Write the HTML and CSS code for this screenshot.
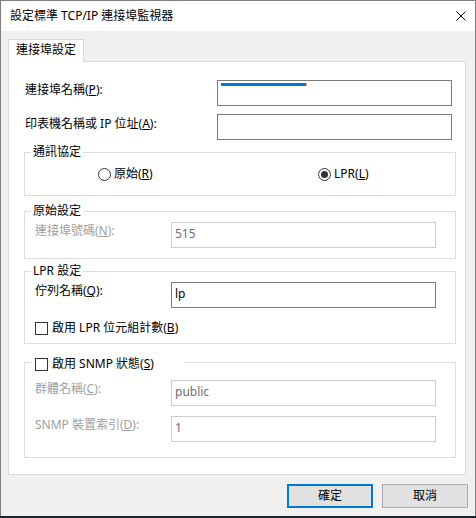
FILE: index.html
```html
<!DOCTYPE html>
<html lang="zh-Hant">
<head>
<meta charset="utf-8">
<title>設定標準 TCP/IP 連接埠監視器</title>
<link rel="stylesheet" href="styles.css">
</head>
<body>
<div class="window">
  <div class="titlebar">
    <span class="title">設定標準 TCP/IP 連接埠監視器</span>
    <svg class="close" width="10" height="10" viewBox="0 0 10 10"><path d="M0.5 0.5 L9.5 9.5 M9.5 0.5 L0.5 9.5" stroke="#000" stroke-width="1" fill="none"/></svg>
  </div>
  <div class="client">
    <div class="tabs"><div class="tab">連接埠設定</div></div>
    <div class="panel">
      <div class="row">
        <span class="lbl">連接埠名稱(<u>P</u>):</span>
        <div class="field wide"><span class="bar"></span></div>
      </div>
      <div class="row second">
        <span class="lbl">印表機名稱或 IP 位址(<u>A</u>):</span>
        <div class="field wide"></div>
      </div>

      <div class="group g-proto">
        <span class="legend">通訊協定</span>
        <div class="radios">
          <span class="opt first"><span class="radio"></span><span>原始(<u>R</u>)</span></span>
          <span class="opt"><span class="radio checked"></span><span>LPR(<u>L</u>)</span></span>
        </div>
      </div>

      <div class="group g-raw">
        <span class="legend">原始設定</span>
        <div class="frow">
          <span class="glbl disabled">連接埠號碼(<u>N</u>):</span>
          <div class="field gfield off">515</div>
        </div>
      </div>

      <div class="group g-lpr">
        <span class="legend">LPR 設定</span>
        <div class="frow">
          <span class="glbl">佇列名稱(<u>Q</u>):</span>
          <div class="field gfield">lp</div>
        </div>
        <div class="crow"><span class="check"></span><span>啟用 LPR 位元組計數(<u>B</u>)</span></div>
      </div>

      <div class="group g-snmp">
        <span class="legend check-legend"><span class="check"></span><span>啟用 SNMP 狀態(<u>S</u>)</span></span>
        <div class="frow">
          <span class="glbl disabled">群體名稱(<u>C</u>):</span>
          <div class="field gfield off">public</div>
        </div>
        <div class="frow next">
          <span class="glbl disabled">SNMP 裝置索引(<u>D</u>):</span>
          <div class="field gfield off">1</div>
        </div>
      </div>
    </div>
    <div class="buttons">
      <button class="btn default">確定</button>
      <button class="btn">取消</button>
    </div>
  </div>
</div>
</body>
</html>
```

FILE: styles.css
```css
* { box-sizing: border-box; }
html, body { margin: 0; padding: 0; }
body {
  background: #1d2431;
  width: 476px;
  height: 518px;
  overflow: hidden;
  font-family: "Noto Sans", "Noto Sans CJK TC", sans-serif;
  font-size: 12px;
  line-height: 16px;
  color: #000;
}
u { text-decoration: underline; text-underline-offset: 1px; }

.window {
  width: 476px;
  height: 516px;
  border: 1px solid #7f7f7f;
  border-bottom: none;
  background: #f0f0f0;
  display: flex;
  flex-direction: column;
}
.titlebar {
  height: 30px;
  background: #fff;
  display: flex;
  align-items: center;
  padding-left: 9px;
  padding-right: 9px;
}
.title { flex: 1; }
.close { display: block; }

.client { padding-left: 7px; }
.tabs { margin-top: 8px; display: flex; }
.tab {
  width: 76px;
  height: 23px;
  border: 1px solid #d9d9d9;
  border-bottom: none;
  background: #fff;
  padding-left: 7px;
  line-height: 20px;
  margin-bottom: -1px;
  position: relative;
  z-index: 1;
}
.panel {
  width: 458px;
  height: 414px;
  background: #fff;
  border: 1px solid #d9d9d9;
  padding: 18px 9px 0 15px;
}
.row {
  display: flex;
  align-items: flex-start;
  height: 26px;
}
.row.second { margin-top: 8px; }
.row .lbl { flex: 1; padding-left: 1px; margin-top: 2px; }
.field {
  height: 26px;
  border: 1px solid #7a7a7a;
  background: #fff;
  padding-left: 3px;
  line-height: 22px;
}
.field.wide { width: 235px; margin-right: 4px; position: relative; }
.bar {
  display: block;
  width: 86px;
  height: 3px;
  margin-top: 2px;
  background: #0078d7;
  border-right: 1px solid #f0a050;
}

.group {
  position: relative;
  border: 1px solid #dcdcdc;
}
.legend {
  position: absolute;
  top: -9px;
  left: 6px;
  padding: 0 2px;
  background: #fff;
  line-height: 16px;
}
.g-proto { margin-top: 12px; height: 44px; padding-top: 13px; }
.radios { display: flex; height: 16px; align-items: center; }
.opt { display: flex; align-items: center; gap: 3px; }
.opt.first { margin-left: 73px; width: 220px; }
.radio {
  width: 13px;
  height: 13px;
  border: 1px solid #333;
  border-radius: 50%;
  display: flex;
  align-items: center;
  justify-content: center;
  background: #fff;
}
.radio.checked::after {
  content: "";
  width: 7px;
  height: 7px;
  border-radius: 50%;
  background: #333;
}

.g-raw { margin-top: 15px; height: 48px; padding-top: 10px; }
.g-lpr { margin-top: 12px; height: 73px; padding-top: 10px; }
.g-snmp { margin-top: 18px; height: 96px; padding-top: 17px; }

.frow { display: flex; align-items: flex-start; height: 26px; padding-left: 10px; }
.frow.next { margin-top: 10px; }
.glbl { width: 136px; margin-top: 1px; }
.glbl.disabled { color: #a0a0a0; }
.gfield { width: 265px; }
.field.off { border-color: #cccccc; color: #6d6d6d; }

.crow {
  display: flex;
  align-items: center;
  gap: 4px;
  height: 16px;
  margin-top: 12px;
  padding-left: 10px;
}
.check {
  display: inline-block;
  width: 13px;
  height: 13px;
  border: 1px solid #333;
  background: #fff;
}
.check-legend {
  top: -7px;
  left: 8px;
  width: 151px;
  padding: 0 0 0 2px;
  display: flex;
  align-items: center;
  gap: 4px;
}

.buttons {
  display: flex;
  justify-content: flex-end;
  gap: 9px;
  margin-top: 9px;
  padding-right: 7px;
}
.btn {
  width: 86px;
  height: 24px;
  margin: 0;
  padding: 0;
  font: inherit;
  color: #000;
  background: #e1e1e1;
  border: 1px solid #adadad;
}
.btn.default { border: 2px solid #0078d7; }
```
